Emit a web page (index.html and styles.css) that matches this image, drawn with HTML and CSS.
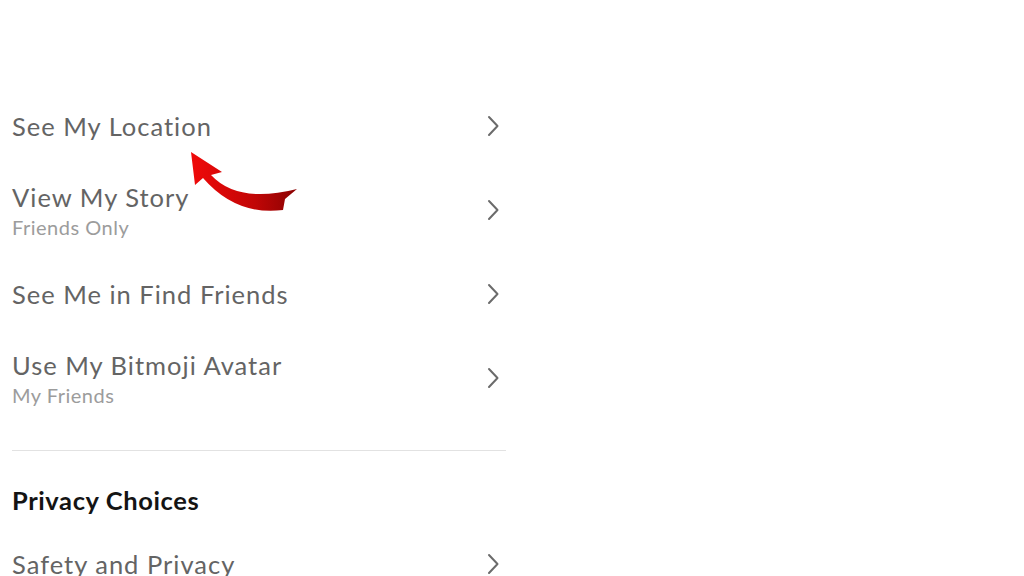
FILE: index.html
```html
<!DOCTYPE html>
<html>
<head>
<meta charset="utf-8">
<link rel="stylesheet" href="styles.css">
</head>
<body>
<div class="page">
  <div class="list">
    <div class="row">
      <div class="texts"><div class="title">See My Location</div></div>
      <svg class="chev" viewBox="0 0 12 22" width="12" height="22"><path d="M2 2 L10.5 11 L2 20" fill="none" stroke="#6b6b6b" stroke-width="2" stroke-linecap="round" stroke-linejoin="round"/></svg>
    </div>
    <div class="row">
      <div class="texts"><div class="title">View My Story</div><div class="sub">Friends Only</div></div>
      <svg class="chev" viewBox="0 0 12 22" width="12" height="22"><path d="M2 2 L10.5 11 L2 20" fill="none" stroke="#6b6b6b" stroke-width="2" stroke-linecap="round" stroke-linejoin="round"/></svg>
    </div>
    <div class="row">
      <div class="texts"><div class="title">See Me in Find Friends</div></div>
      <svg class="chev" viewBox="0 0 12 22" width="12" height="22"><path d="M2 2 L10.5 11 L2 20" fill="none" stroke="#6b6b6b" stroke-width="2" stroke-linecap="round" stroke-linejoin="round"/></svg>
    </div>
    <div class="row">
      <div class="texts"><div class="title">Use My Bitmoji Avatar</div><div class="sub">My Friends</div></div>
      <svg class="chev" viewBox="0 0 12 22" width="12" height="22"><path d="M2 2 L10.5 11 L2 20" fill="none" stroke="#6b6b6b" stroke-width="2" stroke-linecap="round" stroke-linejoin="round"/></svg>
    </div>
  </div>
  <div class="divider"></div>
  <div class="section">Privacy Choices</div>
  <div class="row last">
    <div class="texts"><div class="title">Safety and Privacy</div></div>
    <svg class="chev" viewBox="0 0 12 22" width="12" height="22"><path d="M2 2 L10.5 11 L2 20" fill="none" stroke="#6b6b6b" stroke-width="2" stroke-linecap="round" stroke-linejoin="round"/></svg>
  </div>
  <svg class="arrow" width="1024" height="576" viewBox="0 0 1024 576">
    <defs>
      <linearGradient id="ag" x1="0" y1="0" x2="1" y2="0">
        <stop offset="0" stop-color="#f00a0a"/>
        <stop offset="0.6" stop-color="#c10606"/>
        <stop offset="1" stop-color="#8a0202"/>
      </linearGradient>
    </defs>
    <path d="M191 152 L222 172 L211 175 Q238 204 297 189 L285 199 L283 210 Q236 216 203 178 L195 185 Z" fill="url(#ag)"/>
  </svg>
</div>
</body>
</html>
```
FILE: styles.css
```css
html, body {
  margin: 0;
  padding: 0;
  background: #ffffff;
}
body {
  width: 1024px;
  height: 576px;
  overflow: hidden;
  font-family: "Lato", "Noto Sans", sans-serif;
}
.page {
  position: relative;
  width: 1024px;
  height: 576px;
  padding-top: 84px;
  box-sizing: border-box;
}
.list {
  display: flex;
  flex-direction: column;
}
.row {
  width: 494px;
  margin-left: 12px;
  height: 84px;
  display: flex;
  align-items: center;
  justify-content: space-between;
}
.texts {
  display: flex;
  flex-direction: column;
}
.title {
  font-size: 25.5px;
  letter-spacing: 1px;
  color: #646464;
  line-height: 30px;
}
.sub {
  font-size: 20px;
  letter-spacing: 0.5px;
  color: #9c9c9c;
  line-height: 24px;
  margin-top: 3px;
}
.chev {
  margin-right: 7px;
  flex: none;
}
.divider {
  margin-left: 12px;
  margin-top: 30px;
  width: 494px;
  height: 1px;
  background: #e2e2e2;
}
.section {
  margin-left: 12px;
  margin-top: 34px;
  font-size: 25.5px;
  letter-spacing: 0.6px;
  font-weight: 700;
  color: #141414;
  line-height: 30px;
}
.row.last {
  margin-top: 14px;
  height: 70px;
}
.arrow {
  position: absolute;
  left: 0;
  top: 0;
  pointer-events: none;
}
```
